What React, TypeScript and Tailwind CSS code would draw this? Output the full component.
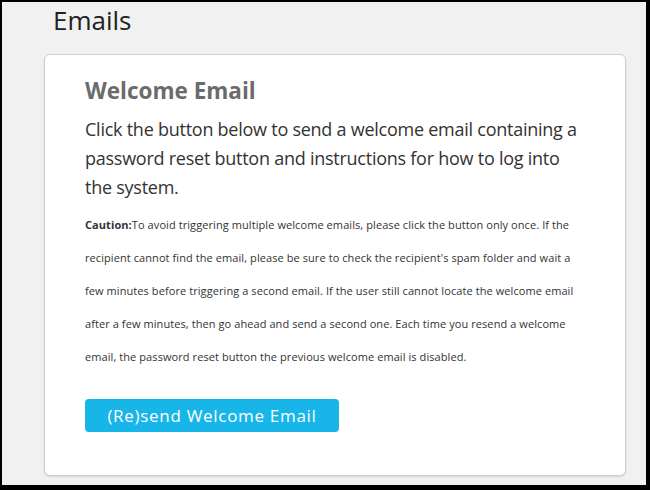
export default function App() {
  return (
    <div
      className="w-[650px] h-[490px] border-black border-l-2 border-t-2 border-r-4 border-b-[5px] bg-[#f1f1f1] overflow-hidden"
      style={{ fontFamily: '"Open Sans", "Noto Sans", sans-serif' }}
    >
      <h1 className="ml-[51px] mt-[2px] text-[26px] leading-[33px] text-[#222]">Emails</h1>
      <div className="ml-[42px] mt-[17px] w-[582px] rounded-[6px] border border-[#cfcfcf] bg-white shadow-[0_1px_2px_rgba(0,0,0,0.12)] pl-[40px] pr-[40px] pt-[21px] pb-[43px]">
        <h2 className="text-[22.5px] leading-[30px] font-bold text-[#6b6b6b]">Welcome Email</h2>
        <p className="mt-[9px] text-[18px] leading-[29px] tracking-[-0.25px] text-[#333]">
          Click the button below to send a welcome email containing a password reset button and instructions for how to log into the system.
        </p>
        <p className="mt-[6px] text-[11px] leading-[33px] tracking-[0.08px] text-[#333]">
          <span className="font-bold">Caution:</span>To avoid triggering multiple welcome emails, please click the button only once. If the recipient cannot find the email, please be sure to check the recipient's spam folder and wait a few minutes before triggering a second email. If the user still cannot locate the welcome email after a few minutes, then go ahead and send a second one. Each time you resend a welcome email, the password reset button the previous welcome email is disabled.
        </p>
        <button className="mt-[26px] block w-[254px] h-[33px] rounded-[4px] bg-[#17b5e8] text-white text-[17px] tracking-[0.7px] leading-[33px]">
          (Re)send Welcome Email
        </button>
      </div>
    </div>
  );
}
